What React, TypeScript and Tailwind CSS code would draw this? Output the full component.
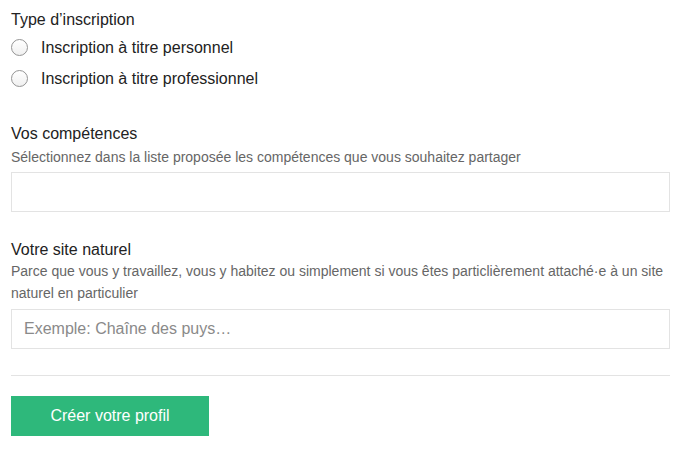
import React from 'react';

const Radio = ({ label }: { label: string }) => (
  <label className="flex items-center h-[31px] gap-[13px] cursor-pointer">
    <span className="w-[17px] h-[17px] rounded-full border border-[#949494] bg-gradient-to-b from-white to-[#f0f0f0] shrink-0" />
    <span className="text-[16px] text-[#222]">{label}</span>
  </label>
);

export default function App() {
  return (
    <div className="bg-white min-h-[454px] px-[11px] pt-[10px] text-[#222]" style={{ fontFamily: '"Liberation Sans", Arial, sans-serif' }}>
      <div className="w-[659px]">
        <p className="text-[16px] leading-[20px]">Type d’inscription</p>
        <div className="mt-[2px]">
          <Radio label="Inscription à titre personnel" />
          <Radio label="Inscription à titre professionnel" />
        </div>

        <p className="mt-[30px] text-[16px] leading-[20px]">Vos compétences</p>
        <p className="mt-[2px] text-[14px] leading-[22px] text-[#666]">
          Sélectionnez dans la liste proposée les compétences que vous souhaitez partager
        </p>
        <div className="mt-[4px] h-[40px] border border-[#e3e3e3] bg-white" />

        <p className="mt-[28px] text-[16px] leading-[20px]">Votre site naturel</p>
        <p className="text-[14px] leading-[22px] text-[#666]">
          Parce que vous y travaillez, vous y habitez ou simplement si vous êtes particlièrement attaché·e à un site naturel en particulier
        </p>
        <input
          className="mt-[5px] block w-full h-[40px] border border-[#e3e3e3] px-[12px] text-[16px] text-[#222] placeholder:text-[#8a8a8a] outline-none"
          placeholder="Exemple: Chaîne des puys…"
        />

        <div className="mt-[26px] border-t border-[#e3e3e3]" />

        <button className="mt-[20px] w-[198px] h-[40px] bg-[#2eb87b] text-white text-[16px]">
          Créer votre profil
        </button>
      </div>
    </div>
  );
}
